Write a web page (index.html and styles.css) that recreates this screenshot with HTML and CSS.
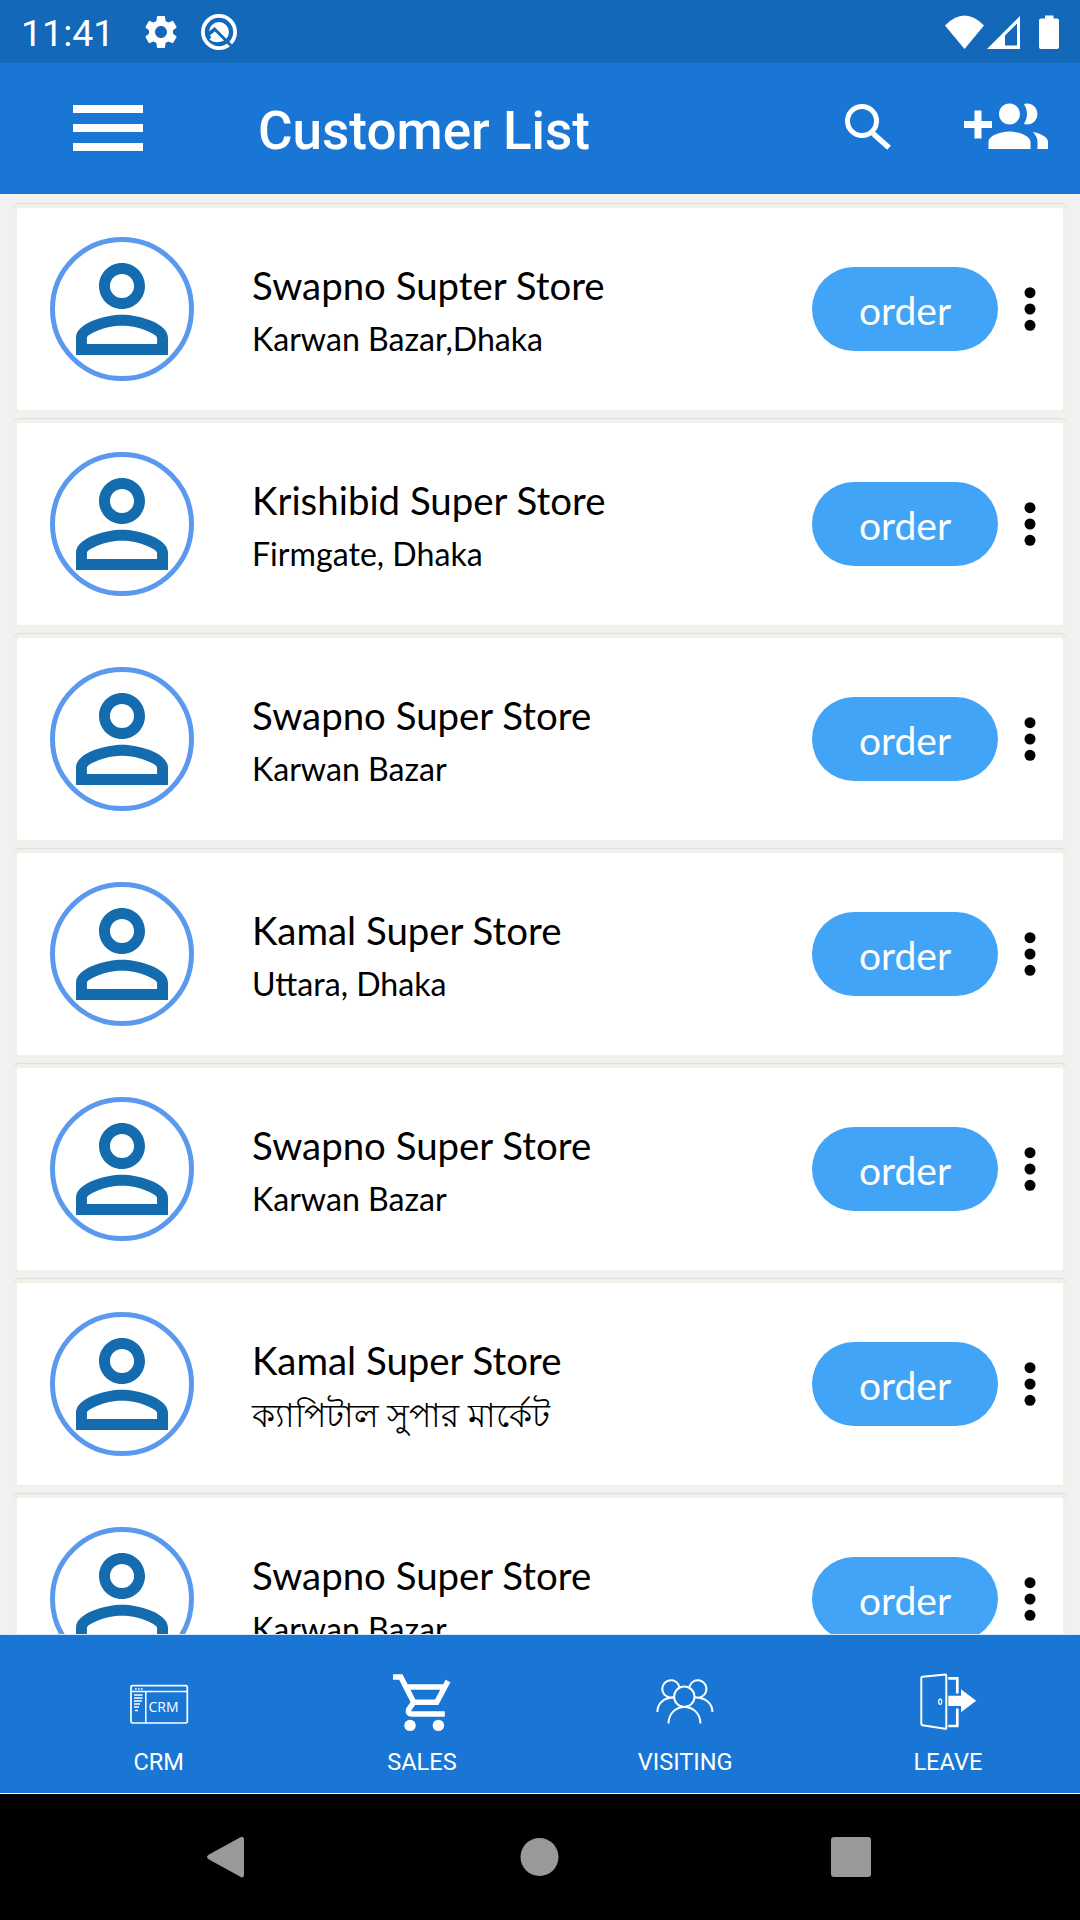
FILE: index.html
```html
<!DOCTYPE html>
<html lang="en">
<head>
<meta charset="utf-8">
<title>Customer List</title>
<link rel="stylesheet" href="styles.css">
</head>
<body>
<svg class="defs" width="0" height="0">
  <symbol id="person" viewBox="0 0 24 24"><path d="M12 5.9c1.16 0 2.1.94 2.1 2.1s-.94 2.1-2.1 2.1S9.9 9.16 9.9 8s.94-2.1 2.1-2.1m0 9c2.97 0 6.1 1.46 6.1 2.1v1.1H5.9V17c0-.64 3.13-2.1 6.1-2.1M12 4C9.79 4 8 5.79 8 8s1.79 4 4 4 4-1.79 4-4-1.79-4-4-4zm0 9c-2.67 0-8 1.34-8 4v3h16v-3c0-2.66-5.33-4-8-4z"/></symbol>
  <symbol id="dots" viewBox="0 0 12 46"><circle cx="6" cy="6.7" r="5.5"/><circle cx="6" cy="23" r="5.5"/><circle cx="6" cy="39.3" r="5.5"/></symbol>
</svg>
<div class="screen">
  <div class="status">
    <span class="time">11:41</span>
    <svg class="gear" width="40" height="40" viewBox="0 0 24 24"><path d="M19.14 12.94c.04-.3.06-.61.06-.94 0-.32-.02-.64-.07-.94l2.03-1.58c.18-.14.23-.41.12-.61l-1.92-3.32c-.12-.22-.37-.29-.59-.22l-2.39.96c-.5-.38-1.03-.7-1.62-.94l-.36-2.54c-.04-.24-.24-.41-.48-.41h-3.84c-.24 0-.43.17-.47.41l-.36 2.54c-.59.24-1.13.57-1.62.94l-2.39-.96c-.22-.08-.47 0-.59.22L2.74 8.87c-.12.21-.08.47.12.61l2.03 1.58c-.05.3-.09.63-.09.94s.02.64.07.94l-2.03 1.58c-.18.14-.23.41-.12.61l1.92 3.32c.12.22.37.29.59.22l2.39-.96c.5.38 1.03.7 1.62.94l.36 2.54c.05.24.24.41.48.41h3.84c.24 0 .44-.17.47-.41l.36-2.54c.59-.24 1.13-.56 1.62-.94l2.39.96c.22.08.47 0 .59-.22l1.92-3.32c.12-.22.07-.47-.12-.61l-2.01-1.58zM12 15.6c-1.98 0-3.6-1.62-3.6-3.6s1.62-3.6 3.6-3.6 3.6 1.62 3.6 3.6-1.62 3.6-3.6 3.6z"/></svg>
    <svg class="android-q" width="38" height="38" viewBox="0 0 38 38">
      <circle cx="19" cy="19" r="16.1" fill="none" stroke="#fff" stroke-width="3.8"/>
      <circle cx="19" cy="19" r="10"/>
      <path class="cut" d="M8 21.500l6.500-5.500 16.500 16.500"/>
      <path class="cut" d="M8 22l6-5M8 26l2-3" stroke-width="2"/>
      <path d="M9.500 26.500l4-4.500 7 6.500q-6.500 2-11-2z"/>
    </svg>
    <svg class="signals" width="116" height="36" viewBox="944 13 116 36">
      <path d="M945 24.500Q964.500 4.500 984 24.500L964.500 48z"/>
      <path fill-rule="evenodd" d="M987 48L1020 15V48zM1005 34.500V44.500H1017V22.500z"/>
      <path d="M1045 17.500V14.500h8.500v3h3.500q2 0 2 2V46q0 2-2 2h-16q-2 0-2-2V19.500q0-2 2-2z"/>
    </svg>
  </div>
  <header class="appbar">
    <div class="menu"><i></i><i></i><i></i></div>
    <h1>Customer List</h1>
    <svg class="search" width="46" height="46" viewBox="845 104 46 46" fill="none" stroke="#fff"><circle cx="862" cy="121" r="14.500" stroke-width="5"/><path d="M873 133.500l16 14.300" stroke-width="5.500"/></svg>
    <svg class="add" width="84" height="84" viewBox="0 0 24 24"><path d="M8 10H5V7H3v3H0v2h3v3h2v-3h3v-2zm10 1c1.660 0 2.990-1.340 2.990-3S19.660 5 18 5c-.32 0-.63.05-.91.14.57.81.9 1.790.9 2.860s-.34 2.040-.9 2.860c.28.09.59.14.91.14zm-5 0c1.660 0 2.990-1.340 2.990-3S14.660 5 13 5c-1.660 0-3 1.340-3 3s1.340 3 3 3zm6.620 2.160c.83.73 1.380 1.660 1.380 2.840v2h3v-2c0-1.540-2.370-2.490-4.380-2.840zM13 13c-2 0-6 1-6 3v2h12v-2c0-2-4-3-6-3z"/></svg>
  </header>
  <main class="list">
    <article class="card"><div class="avatar"><svg><use href="#person"/></svg></div><div class="info"><h2>Swapno Supter Store</h2><p>Karwan Bazar,Dhaka</p></div><button class="order">order</button><svg class="more"><use href="#dots"/></svg></article>
    <article class="card"><div class="avatar"><svg><use href="#person"/></svg></div><div class="info"><h2>Krishibid Super Store</h2><p>Firmgate, Dhaka</p></div><button class="order">order</button><svg class="more"><use href="#dots"/></svg></article>
    <article class="card"><div class="avatar"><svg><use href="#person"/></svg></div><div class="info"><h2>Swapno Super Store</h2><p>Karwan Bazar</p></div><button class="order">order</button><svg class="more"><use href="#dots"/></svg></article>
    <article class="card"><div class="avatar"><svg><use href="#person"/></svg></div><div class="info"><h2>Kamal Super Store</h2><p>Uttara, Dhaka</p></div><button class="order">order</button><svg class="more"><use href="#dots"/></svg></article>
    <article class="card"><div class="avatar"><svg><use href="#person"/></svg></div><div class="info"><h2>Swapno Super Store</h2><p>Karwan Bazar</p></div><button class="order">order</button><svg class="more"><use href="#dots"/></svg></article>
    <article class="card"><div class="avatar"><svg><use href="#person"/></svg></div><div class="info"><h2>Kamal Super Store</h2><p class="bn" lang="bn">ক্যাপিটাল সুপার মার্কেট</p></div><button class="order">order</button><svg class="more"><use href="#dots"/></svg></article>
    <article class="card"><div class="avatar"><svg><use href="#person"/></svg></div><div class="info"><h2>Swapno Super Store</h2><p>Karwan Bazar</p></div><button class="order">order</button><svg class="more"><use href="#dots"/></svg></article>
  </main>
  <nav class="tabs">
    <a class="tab">
      <svg width="60" height="60" viewBox="129 1673 60 60" fill="none" stroke="#fff">
        <rect x="131" y="1685.700" width="56.300" height="37.300" rx="1.500" stroke-width="1.700"/>
        <path d="M131 1691.500h56M145.800 1691.500v31.500" stroke-width="1.500"/>
        <path d="M135 1689h1.700m1.300 0h1.700m1.300 0h1.700" stroke-width="1.500"/>
        <path d="M134 1695h8.500M134 1698h8.500M134 1701h8M134 1704h6M134 1707h5M135 1710.500h3" stroke-width="1.700"/>
        <text class="crm" x="148.500" y="1711.800" textLength="30" lengthAdjust="spacingAndGlyphs">CRM</text>
      </svg>
      <span>CRM</span>
    </a>
    <a class="tab">
      <svg width="60" height="60" viewBox="392 1673 60 60" fill="none" stroke="#fff" stroke-width="5.500">
        <path d="M393 1676.900h7.800l12.900 25.400h23L448 1681M405 1686.900h39M413.700 1702.300l-5 7.200q-1.500 4.400 3.300 4.400h32.800"/>
        <g fill="#fff" stroke="none"><circle cx="410" cy="1725.400" r="5.700"/><circle cx="438.400" cy="1725.400" r="5.700"/></g>
      </svg>
      <span>SALES</span>
    </a>
    <a class="tab">
      <svg width="60" height="60" viewBox="655 1673 60 60" fill="none" stroke="#fff" stroke-width="2">
        <circle cx="684.300" cy="1696.700" r="10.200"/>
        <path d="M673.500 1697.200A8.700 8.700 0 1 1 679.500 1687M695 1697.200A8.700 8.700 0 1 0 689.300 1687M657.400 1712C657.400 1703 664 1697.600 674 1697.600M712.400 1712C712.400 1703 705.500 1697.600 695 1697.600M668.500 1723.500C669 1701.500 700 1701.500 700.400 1723.500"/>
      </svg>
      <span>VISITING</span>
    </a>
    <a class="tab">
      <svg width="60" height="60" viewBox="918 1673 60 60" fill="none" stroke="#fff" stroke-width="2">
        <path stroke-linejoin="round" d="M922.500 1676.800l23-2.300q.8 0 .8 1v52.300q0 1.200-1.200 1l-22.600-3.600q-1.200-.4-1.200-1.400v-46q0-.9 1.200-1z"/>
        <ellipse cx="940.200" cy="1701.700" rx="1.500" ry="2.600" stroke-width="1.300"/>
        <path d="M948.300 1678.300h9v15.200M957.300 1708.500v17.500h-9" stroke-width="2.700"/>
        <path fill="#fff" stroke="none" d="M948.300 1695.700h12.700v-6.500l15.200 11.500-15.200 11.500v-6.200h-12.700z"/>
      </svg>
      <span>LEAVE</span>
    </a>
  </nav>
  <footer class="sysnav">
    <svg width="40" height="44" viewBox="0 0 40 44"><path d="M3 19.500L34 2.500Q38 .5 38 4.500V39.500Q38 44 34 41.500L3 24.500Q-1 22 3 19.500z"/></svg>
    <svg width="40" height="40" viewBox="0 0 40 40"><circle cx="20.500" cy="20" r="19"/></svg>
    <svg width="40" height="40" viewBox="0 0 40 40"><rect width="40" height="40" rx="3"/></svg>
  </footer>
</div>
</body>
</html>
```
FILE: styles.css
```css
* { box-sizing: border-box; }
body { margin: 0; background: #000; }
svg { display: block; flex: none; fill: #fff; }
svg[fill="none"] { fill: none; }
h1, h2, p { margin: 0; white-space: nowrap; }
.defs { display: none; }
.screen { width: 1080px; height: 1920px; display: flex; flex-direction: column; overflow: hidden; }

.status { height: 63px; flex: none; background: #1468b9; color: #fff; display: flex; align-items: center; padding: 0 20px 0 21px; font-family: Roboto, sans-serif; }
.time { font-size: 37.500px; line-height: 61px; width: 120px; padding-top: 4px; }
.android-q { margin-left: 19px; }
.cut { fill: none; stroke: #1468b9; stroke-width: 3; }
.signals { margin-left: auto; }

.appbar { height: 131px; flex: none; background: #1976d4; display: flex; align-items: center; padding: 0 32px 0 73px; }
.menu { width: 70px; display: flex; flex-direction: column; gap: 11px; margin-bottom: 1px; }
.menu i { height: 8px; background: #fff; }
.appbar h1 { margin-left: 115px; padding-top: 5px; color: #fff; font: 500 53px/62px Roboto, sans-serif; }
.search { margin-left: auto; margin-bottom: 3px; }
.add { margin-left: 73px; margin-bottom: 2px; }

.list { height: 1440px; flex: none; overflow: hidden; background: #f1f1f1; padding: 10px 13px 0; display: flex; flex-direction: column; gap: 6px; }
.card { height: 209px; flex: none; border: 4px solid #f0f1e8; border-bottom-width: 3px; border-radius: 6px; background: #fff; box-shadow: 0 -1px 1px #dcdcdc; display: flex; align-items: center; padding: 0 27px 0 33px; }
.avatar { width: 144px; height: 144px; flex: none; border: 5px solid #5b99ee; border-radius: 50%; display: grid; place-content: center; }
.avatar svg { width: 138px; height: 138px; fill: #146cae; }
.info { margin-left: 58px; padding-top: 4px; flex: 1; color: #000; }
.info h2 { font: 400 38.400px/54px Lato, sans-serif; }
.info p { margin-top: 2px; font: 400 32.150px/50px Lato, sans-serif; }
.info .bn { font-size: 33.200px; }
.order { width: 186px; height: 84px; padding: 2px 0 0; border: 0; border-radius: 42px; background: #42a4f6; color: #fff; font: 400 39px/46px Lato, sans-serif; }
.more { width: 12px; height: 46px; margin-left: 26px; fill: #000; }

.tabs { height: 160px; flex: none; background: #1976d4; border-top: 1px solid #d8e8f7; border-bottom: 1px solid #fff; display: flex; padding: 38px 0 0 27px; }
.tab { width: 263.300px; flex: none; display: flex; flex-direction: column; align-items: center; gap: 14px; color: #fff; font: 23.600px/30px Roboto, sans-serif; }
.tab:last-child { width: 262px; }
.crm { font: 15px "Open Sans", sans-serif; fill: #fff; stroke: none; }

.sysnav { flex: 1; background: #000; display: flex; align-items: center; justify-content: space-between; padding: 0 209px 0 206px; }
.sysnav svg { fill: #999; }
```
